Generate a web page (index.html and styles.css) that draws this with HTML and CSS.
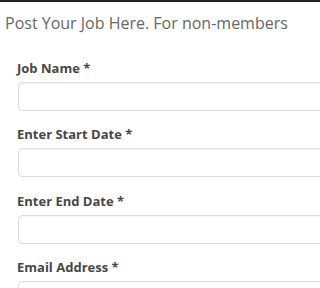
FILE: index.html
```
<!DOCTYPE html>
<html>
<head>
<meta charset="utf-8">
<link rel="stylesheet" href="styles.css">
</head>
<body>
<div class="page">
  <div class="topbar"></div>
  <h1 class="title">Post Your Job Here. For non-members</h1>
  <form class="form">
    <div class="field">
      <label class="label">Job Name *</label>
      <div class="input"></div>
    </div>
    <div class="field">
      <label class="label">Enter Start Date *</label>
      <div class="input"></div>
    </div>
    <div class="field">
      <label class="label">Enter End Date *</label>
      <div class="input"></div>
    </div>
    <div class="field">
      <label class="label">Email Address *</label>
      <div class="input"></div>
    </div>
  </form>
</div>
</body>
</html>
```
FILE: styles.css
```
html, body {
  margin: 0;
  padding: 0;
  background: #fff;
}
body {
  font-family: "Open Sans", "Liberation Sans", sans-serif;
}
.page {
  width: 100%;
  height: 288px;
  overflow: hidden;
}
.topbar {
  height: 2px;
  background: #222;
}
.title {
  margin: 0;
  padding: 9px 0 0 5px;
  font-size: 16px;
  line-height: 24px;
  font-weight: 400;
  color: #666;
  white-space: nowrap;
}
.form {
  margin: 0;
  padding: 23.5px 0 0 18px;
  display: flex;
  flex-direction: column;
  gap: 14.5px;
}
.field {
  display: flex;
  flex-direction: column;
  gap: 5px;
}
.label {
  font-size: 13px;
  line-height: 18px;
  font-weight: 700;
  color: #474747;
  margin-left: -1px;
}
.input {
  height: 27px;
  margin-right: -20px;
  border: 1px solid #dedede;
  border-radius: 4px;
  background: #fff;
  box-shadow: inset 0 1px 1px rgba(0,0,0,0.04);
}
```
